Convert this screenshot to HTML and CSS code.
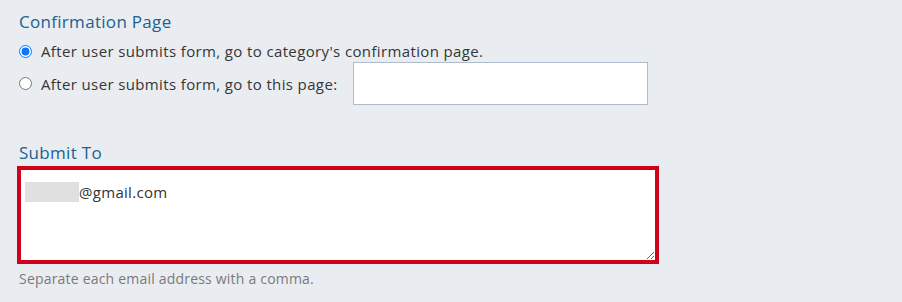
FILE: index.html
```html
<!DOCTYPE html>
<html>
<head>
<meta charset="utf-8">
<link rel="stylesheet" href="styles.css">
</head>
<body>
<div class="page">
  <section class="section">
    <h2 class="section-title">Confirmation Page</h2>
    <label class="radio-row">
      <input type="radio" name="confirm" class="radio" checked>
      <span class="radio-label">After user submits form, go to category's confirmation page.</span>
    </label>
    <label class="radio-row radio-row-input">
      <input type="radio" name="confirm" class="radio">
      <span class="radio-label">After user submits form, go to this page:</span>
      <input type="text" class="text-input">
    </label>
  </section>
  <section class="section section-submit">
    <h2 class="section-title">Submit To</h2>
    <div class="textarea"><span class="redacted"></span>@gmail.com</div>
    <p class="help">Separate each email address with a comma.</p>
  </section>
</div>
</body>
</html>
```
FILE: styles.css
```css
html, body {
  margin: 0;
  padding: 0;
  background: #e9edf1;
}
body {
  font-family: "Open Sans", "Liberation Sans", sans-serif;
  color: #363636;
}
.page {
  padding: 10px 19px 0;
}
.section-title {
  margin: 0;
  font-size: 17px;
  letter-spacing: 0.3px;
  font-weight: 400;
  line-height: 24px;
  color: #22608f;
}
.section {
  display: flex;
  flex-direction: column;
}
.radio-row {
  display: flex;
  align-items: center;
  font-size: 15px;
  letter-spacing: 0.37px;
  line-height: 22px;
}
.section .radio-row:first-of-type {
  margin-top: 6px;
}
.radio {
  width: 13px;
  height: 13px;
  margin: 0 9px 0 0;
  accent-color: #0b76f7;
}
.radio-row-input {
  height: 43px;
}
.text-input {
  width: 295px;
  height: 43px;
  box-sizing: border-box;
  margin-left: 16px;
  border: 1px solid #aebccb;
  background: #fff;
}
.section-submit {
  margin-top: 36px;
}
.textarea {
  box-sizing: border-box;
  width: 642px;
  height: 98px;
  margin: 1px 0 0 -2px;
  border: 4px solid #d0021b;
  background: #fff;
  padding: 12px 4px;
  font-size: 15px;
  letter-spacing: 0.3px;
  line-height: 20px;
  color: #333;
  overflow: auto;
  resize: both;
  display: flex;
  align-self: flex-start;
  align-items: flex-start;
}
.redacted {
  display: inline-block;
  width: 54px;
  height: 20px;
  background: #e0e0e0;
}
.help {
  margin: 6px 0 0;
  font-size: 14px;
  letter-spacing: 0.2px;
  line-height: 18px;
  color: #7a7a7a;
}
```
